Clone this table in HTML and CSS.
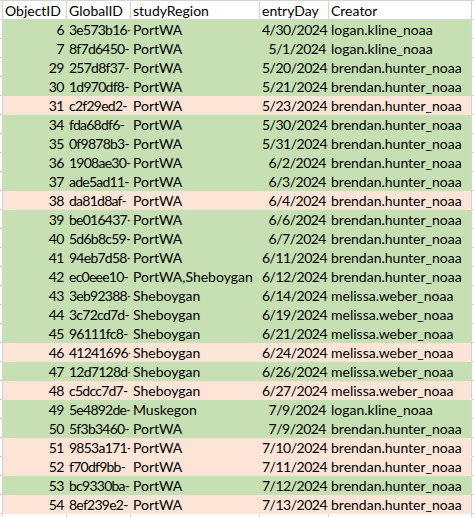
FILE: index.html
```html
<!DOCTYPE html>
<html>
<head>
<meta charset="utf-8">
<link rel="stylesheet" href="styles.css">
</head>
<body>
<div class="sheet">
  <div class="row head">
    <div class="c edge"></div><div class="c c1">ObjectID</div><div class="c c2 hd">GlobalID</div><div class="c c3">studyRegion</div><div class="c c4">entryDay</div><div class="c c5">Creator</div><div class="c tail"></div>
  </div>
  <div class="row good"><div class="c edge"></div><div class="c c1 num">6</div><div class="c c2">3e573b16-</div><div class="c c3">PortWA</div><div class="c c4 num">4/30/2024</div><div class="c c5">logan.kline_noaa</div><div class="c tail"></div></div>
  <div class="row good"><div class="c edge"></div><div class="c c1 num">7</div><div class="c c2">8f7d6450-</div><div class="c c3">PortWA</div><div class="c c4 num">5/1/2024</div><div class="c c5">logan.kline_noaa</div><div class="c tail"></div></div>
  <div class="row good"><div class="c edge"></div><div class="c c1 num">29</div><div class="c c2">257d8f37-</div><div class="c c3">PortWA</div><div class="c c4 num">5/20/2024</div><div class="c c5">brendan.hunter_noaa</div><div class="c tail"></div></div>
  <div class="row good"><div class="c edge"></div><div class="c c1 num">30</div><div class="c c2">1d970df8-</div><div class="c c3">PortWA</div><div class="c c4 num">5/21/2024</div><div class="c c5">brendan.hunter_noaa</div><div class="c tail"></div></div>
  <div class="row bad"><div class="c edge"></div><div class="c c1 num">31</div><div class="c c2">c2f29ed2-</div><div class="c c3">PortWA</div><div class="c c4 num">5/23/2024</div><div class="c c5">brendan.hunter_noaa</div><div class="c tail"></div></div>
  <div class="row good"><div class="c edge"></div><div class="c c1 num">34</div><div class="c c2">fda68df6-</div><div class="c c3">PortWA</div><div class="c c4 num">5/30/2024</div><div class="c c5">brendan.hunter_noaa</div><div class="c tail"></div></div>
  <div class="row good"><div class="c edge"></div><div class="c c1 num">35</div><div class="c c2">0f9878b3-</div><div class="c c3">PortWA</div><div class="c c4 num">5/31/2024</div><div class="c c5">brendan.hunter_noaa</div><div class="c tail"></div></div>
  <div class="row good"><div class="c edge"></div><div class="c c1 num">36</div><div class="c c2">1908ae30-</div><div class="c c3">PortWA</div><div class="c c4 num">6/2/2024</div><div class="c c5">brendan.hunter_noaa</div><div class="c tail"></div></div>
  <div class="row good"><div class="c edge"></div><div class="c c1 num">37</div><div class="c c2">ade5ad11-</div><div class="c c3">PortWA</div><div class="c c4 num">6/3/2024</div><div class="c c5">brendan.hunter_noaa</div><div class="c tail"></div></div>
  <div class="row bad"><div class="c edge"></div><div class="c c1 num">38</div><div class="c c2">da81d8af-</div><div class="c c3">PortWA</div><div class="c c4 num">6/4/2024</div><div class="c c5">brendan.hunter_noaa</div><div class="c tail"></div></div>
  <div class="row good"><div class="c edge"></div><div class="c c1 num">39</div><div class="c c2">be016437-</div><div class="c c3">PortWA</div><div class="c c4 num">6/6/2024</div><div class="c c5">brendan.hunter_noaa</div><div class="c tail"></div></div>
  <div class="row good"><div class="c edge"></div><div class="c c1 num">40</div><div class="c c2">5d6b8c59-</div><div class="c c3">PortWA</div><div class="c c4 num">6/7/2024</div><div class="c c5">brendan.hunter_noaa</div><div class="c tail"></div></div>
  <div class="row good"><div class="c edge"></div><div class="c c1 num">41</div><div class="c c2">94eb7d58-</div><div class="c c3">PortWA</div><div class="c c4 num">6/11/2024</div><div class="c c5">brendan.hunter_noaa</div><div class="c tail"></div></div>
  <div class="row good"><div class="c edge"></div><div class="c c1 num">42</div><div class="c c2">ec0eee10-</div><div class="c c3">PortWA,Sheboygan</div><div class="c c4 num">6/12/2024</div><div class="c c5">brendan.hunter_noaa</div><div class="c tail"></div></div>
  <div class="row good"><div class="c edge"></div><div class="c c1 num">43</div><div class="c c2">3eb92388-</div><div class="c c3">Sheboygan</div><div class="c c4 num">6/14/2024</div><div class="c c5">melissa.weber_noaa</div><div class="c tail"></div></div>
  <div class="row good"><div class="c edge"></div><div class="c c1 num">44</div><div class="c c2">3c72cd7d-</div><div class="c c3">Sheboygan</div><div class="c c4 num">6/19/2024</div><div class="c c5">melissa.weber_noaa</div><div class="c tail"></div></div>
  <div class="row good"><div class="c edge"></div><div class="c c1 num">45</div><div class="c c2">96111fc8-</div><div class="c c3">Sheboygan</div><div class="c c4 num">6/21/2024</div><div class="c c5">melissa.weber_noaa</div><div class="c tail"></div></div>
  <div class="row bad"><div class="c edge"></div><div class="c c1 num">46</div><div class="c c2">41241696-</div><div class="c c3">Sheboygan</div><div class="c c4 num">6/24/2024</div><div class="c c5">melissa.weber_noaa</div><div class="c tail"></div></div>
  <div class="row good"><div class="c edge"></div><div class="c c1 num">47</div><div class="c c2">12d7128d-</div><div class="c c3">Sheboygan</div><div class="c c4 num">6/26/2024</div><div class="c c5">melissa.weber_noaa</div><div class="c tail"></div></div>
  <div class="row bad"><div class="c edge"></div><div class="c c1 num">48</div><div class="c c2">c5dcc7d7-</div><div class="c c3">Sheboygan</div><div class="c c4 num">6/27/2024</div><div class="c c5">melissa.weber_noaa</div><div class="c tail"></div></div>
  <div class="row good"><div class="c edge"></div><div class="c c1 num">49</div><div class="c c2">5e4892de-</div><div class="c c3">Muskegon</div><div class="c c4 num">7/9/2024</div><div class="c c5">logan.kline_noaa</div><div class="c tail"></div></div>
  <div class="row good"><div class="c edge"></div><div class="c c1 num">50</div><div class="c c2">5f3b3460-</div><div class="c c3">PortWA</div><div class="c c4 num">7/9/2024</div><div class="c c5">brendan.hunter_noaa</div><div class="c tail"></div></div>
  <div class="row bad"><div class="c edge"></div><div class="c c1 num">51</div><div class="c c2">9853a171-</div><div class="c c3">PortWA</div><div class="c c4 num">7/10/2024</div><div class="c c5">brendan.hunter_noaa</div><div class="c tail"></div></div>
  <div class="row bad"><div class="c edge"></div><div class="c c1 num">52</div><div class="c c2">f70df9bb-</div><div class="c c3">PortWA</div><div class="c c4 num">7/11/2024</div><div class="c c5">brendan.hunter_noaa</div><div class="c tail"></div></div>
  <div class="row good"><div class="c edge"></div><div class="c c1 num">53</div><div class="c c2">bc9330ba-</div><div class="c c3">PortWA</div><div class="c c4 num">7/12/2024</div><div class="c c5">brendan.hunter_noaa</div><div class="c tail"></div></div>
  <div class="row bad"><div class="c edge"></div><div class="c c1 num">54</div><div class="c c2">8ef239e2-</div><div class="c c3">PortWA</div><div class="c c4 num">7/13/2024</div><div class="c c5">brendan.hunter_noaa</div><div class="c tail"></div></div>
  <div class="row"><div class="c edge"></div><div class="c c1"></div><div class="c c2"></div><div class="c c3"></div><div class="c c4"></div><div class="c c5"></div><div class="c tail"></div></div>
</div>
</body>
</html>
```
FILE: styles.css
```css
html, body {
  margin: 0;
  padding: 0;
  background: #ffffff;
  overflow: hidden;
}
.sheet {
  font-family: Lato, "Liberation Sans", sans-serif;
  font-size: 14px;
  color: #000;
  border-top: 1px solid #d4d4d4;
}
.row {
  display: grid;
  grid-template-columns: 3px 64px 64px 129px 69px 143px 10px;
  height: 19px;
}
.c {
  box-sizing: border-box;
  height: 19px;
  line-height: 18px;
  padding: 1px 2px 0 2px;
  white-space: nowrap;
  overflow: hidden;
  border-right: 1px solid #d4d4d4;
  border-bottom: 1px solid #d4d4d4;
}
.c.edge, .c.tail {
  padding: 0;
}
.num {
  text-align: right;
  letter-spacing: -0.5px;
}
.c2 {
  letter-spacing: -0.75px;
  padding-right: 0;
}
.c2.hd {
  letter-spacing: 0;
}
.good .c1, .good .c2, .good .c3, .good .c4, .good .c5 {
  background: #c6e0b4;
  border-color: #c6e0b4;
}
.bad .c1, .bad .c2, .bad .c3, .bad .c4, .bad .c5 {
  background: #fce4d6;
  border-color: #fce4d6;
}
.good .c5, .bad .c5 {
  border-right-color: #d4d4d4;
}
```
